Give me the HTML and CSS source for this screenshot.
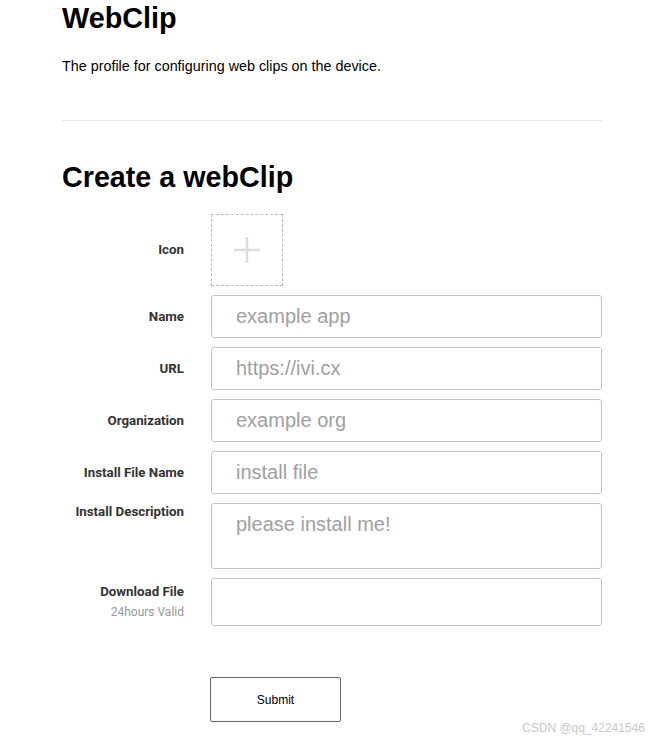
FILE: index.html
```html
<!DOCTYPE html>
<html>
<head>
<meta charset="utf-8">
<title>WebClip</title>
<link rel="stylesheet" href="styles.css">
</head>
<body>
<div class="page">
  <h1 class="title">WebClip</h1>
  <p class="desc">The profile for configuring web clips on the device.</p>
  <div class="divider"></div>
  <h2 class="subtitle">Create a webClip</h2>
  <form class="form">
    <label class="label">Icon</label>
    <div class="icon-box">
      <svg width="26" height="26" viewBox="0 0 26 26"><path d="M13 0V26M0 13H26" stroke="#dcdcdc" stroke-width="2.5" fill="none"/></svg>
    </div>

    <label class="label">Name</label>
    <input class="input" type="text" placeholder="example app">

    <label class="label">URL</label>
    <input class="input" type="text" placeholder="https://ivi.cx">

    <label class="label">Organization</label>
    <input class="input" type="text" placeholder="example org">

    <label class="label">Install File Name</label>
    <input class="input" type="text" placeholder="install file">

    <label class="label label-top">Install Description</label>
    <textarea class="textarea" placeholder="please install me!"></textarea>

    <div class="label label-stack">
      <span>Download File</span>
      <span class="hint">24hours Valid</span>
    </div>
    <div class="file-box"></div>

    <div></div>
    <button class="submit" type="button">Submit</button>
  </form>
</div>
<div class="watermark">CSDN @qq_42241546</div>
</body>
</html>
```

FILE: styles.css
```css
html, body {
  margin: 0;
  padding: 0;
  background: #fff;
}
body {
  font-family: "Liberation Sans", Arial, sans-serif;
  color: #000;
  position: relative;
  min-height: 742px;
}
.page {
  width: 540px;
  margin-left: 62px;
  padding-top: 2px;
}
.title {
  margin: 0;
  font-size: 28.8px;
  line-height: 32px;
  font-weight: bold;
}
.desc {
  margin: 22px 0 0;
  font-size: 14.35px;
  line-height: 20px;
}
.divider {
  margin-top: 44px;
  border-top: 1px solid #e5e5e5;
}
.subtitle {
  margin: 39.5px 0 0;
  font-size: 28.7px;
  line-height: 32px;
  font-weight: bold;
}
.form {
  margin-top: 21.5px;
  display: grid;
  grid-template-columns: 122px 391px;
  column-gap: 27px;
  row-gap: 9px;
  align-items: center;
}
.label {
  font-family: Roboto, "Liberation Sans", sans-serif;
  font-weight: bold;
  font-size: 13.3px;
  line-height: 18px;
  color: #333;
  text-align: right;
}
.label-top {
  align-self: start;
}
.label-stack {
  display: flex;
  flex-direction: column;
  line-height: 20px;
}
.hint {
  font-weight: normal;
  font-size: 12px;
  color: #999;
}
.icon-box {
  width: 72px;
  height: 72px;
  box-sizing: border-box;
  border: 1px dashed #bbb;
  display: flex;
  align-items: center;
  justify-content: center;
}
.input, .textarea, .file-box {
  box-sizing: border-box;
  width: 391px;
  border: 1px solid #c4c4c4;
  border-radius: 3px;
  font-family: "Liberation Sans", Arial, sans-serif;
  font-size: 20px;
  color: #333;
  background: #fff;
  margin: 0;
  outline: none;
}
.input {
  height: 43px;
  padding: 0 24px;
}
.textarea {
  height: 66px;
  padding: 8px 24px;
  line-height: 24px;
  resize: none;
  display: block;
}
.file-box {
  height: 48px;
}
.input::placeholder, .textarea::placeholder {
  color: #a0a0a0;
}
.submit {
  margin-top: 42px;
  margin-left: -1px;
  width: 131px;
  height: 45px;
  background: #fff;
  border: 1px solid #666;
  border-radius: 2px;
  font-family: "Liberation Sans", Arial, sans-serif;
  font-size: 12px;
  color: #000;
  cursor: pointer;
}
.watermark {
  position: absolute;
  right: 16px;
  top: 721px;
  font-family: "Liberation Sans", Arial, sans-serif;
  font-size: 12px;
  color: #c8c8c8;
}
```
